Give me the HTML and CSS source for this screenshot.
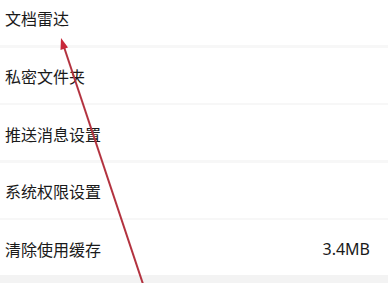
FILE: index.html
```html
<!DOCTYPE html>
<html lang="zh-CN">
<head>
<meta charset="utf-8">
<title>设置</title>
<link rel="stylesheet" href="styles.css">
</head>
<body>
<div class="page">
  <ul class="list">
    <li class="row first"><span class="label">文档雷达</span></li>
    <li class="row"><span class="label">私密文件夹</span></li>
    <li class="row"><span class="label">推送消息设置</span></li>
    <li class="row"><span class="label">系统权限设置</span></li>
    <li class="row"><span class="label">清除使用缓存</span><span class="value">3.4MB</span></li>
  </ul>
  <svg class="arrow" width="388" height="283" viewBox="0 0 388 283" aria-hidden="true">
    <line x1="63" y1="44" x2="145" y2="290" stroke="#b3323f" stroke-width="2"/>
    <polygon points="61,38 68,47.5 60.5,50" fill="#c8283a"/>
  </svg>
</div>
</body>
</html>
```

FILE: styles.css
```css
html, body {
  margin: 0;
  padding: 0;
  background: #f3f3f3;
}
.page {
  position: relative;
  width: 388px;
  height: 283px;
  overflow: hidden;
  background: #f3f3f3;
}
.list {
  list-style: none;
  margin: -10px 0 0 0;
  padding: 0;
  display: flex;
  flex-direction: column;
  gap: 2.5px;
  background: #f7f7f7;
}
.row {
  box-sizing: border-box;
  height: 55px;
  background: #ffffff;
  display: flex;
  align-items: center;
  justify-content: space-between;
  padding: 2px 18px 0 5px;
  font-family: "Noto Sans CJK SC", "Noto Sans", sans-serif;
  font-size: 16px;
  color: #1a1a1a;
}
.first {
  padding-top: 1px;
}
.value {
  font-family: "Noto Sans", "Noto Sans CJK SC", sans-serif;
  font-size: 16px;
  color: #1a1a1a;
}
.arrow {
  position: absolute;
  left: 0;
  top: 0;
  pointer-events: none;
}
```
